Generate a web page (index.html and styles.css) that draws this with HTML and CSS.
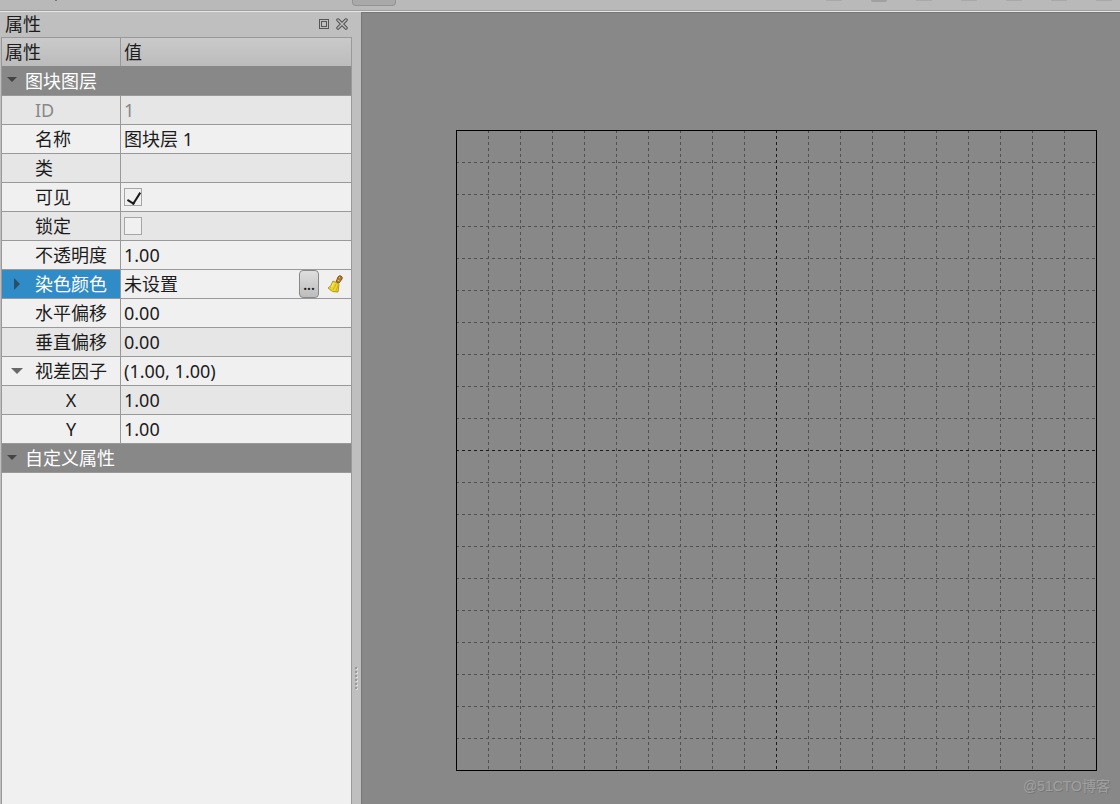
FILE: index.html
```html
<!DOCTYPE html>
<html lang="zh-CN">
<head>
<meta charset="utf-8">
<title>属性</title>
<link rel="stylesheet" href="styles.css">
</head>
<body>
<div class="app">
  <header class="toolbar">
    <span class="speck"></span>
    <button class="tool" type="button" aria-label="工具"></button>
    <div class="shadows"><i></i><i class="strong"></i><i></i><i></i><i></i><i></i><i></i></div>
  </header>
  <main class="work">
    <aside class="dock">
      <div class="title">
        <h1>属性</h1>
        <button type="button" aria-label="浮动"><svg width="12" height="12" viewBox="0 0 12 12" fill="none" stroke="#555" shape-rendering="crispEdges"><path d="M1.5 1.5h9v9h-9z"/><path d="M3.500 3.500h5v5h-5z"/></svg></button>
        <button type="button" aria-label="关闭"><svg width="12" height="12" viewBox="0 0 12 12" fill="none"><path d="M2 2l8 8M10 2l-8 8" stroke="#4c4c4c" stroke-width="3.400" stroke-linecap="round"/><path d="M2 2l8 8M10 2l-8 8" stroke="#c0c0c0" stroke-width="1.500" stroke-linecap="round"/></svg></button>
      </div>
      <div class="tree">
        <table>
          <colgroup><col class="key-col"><col></colgroup>
          <thead><tr><th scope="col">属性</th><th scope="col">值</th></tr></thead>
          <tbody>
            <tr class="group first"><th colspan="2"><svg class="arrow" width="10" height="6"><path d="M0 0h10L5 5z"/></svg>图块图层</th></tr>
            <tr class="alt off"><th scope="row">ID</th><td>1</td></tr>
            <tr><th scope="row">名称</th><td>图块层 1</td></tr>
            <tr class="alt"><th scope="row">类</th><td></td></tr>
            <tr><th scope="row"><label for="visible">可见</label></th><td><input id="visible" type="checkbox" checked></td></tr>
            <tr class="alt"><th scope="row"><label for="locked">锁定</label></th><td><input id="locked" type="checkbox"></td></tr>
            <tr><th scope="row">不透明度</th><td>1.00</td></tr>
            <tr class="selected"><th scope="row"><svg class="arrow side" width="6" height="12"><path d="M0 0v12L6 6z"/></svg>染色颜色</th><td>
              <div class="editor"><span>未设置</span>
                <button class="more" type="button">...</button>
                <button class="clear" type="button" aria-label="清除"><svg width="16" height="18" viewBox="0 0 16 18"><path d="M9 7l2-5q1-2 3-1 2 1 1 3l-3 4z" fill="#b5782c" stroke="#7d5520"/><path d="M12 2l1 1M10.500 5l2 1" stroke="#efc36b"/><path d="M6 6l6 3-1 8q-6 1-10-4 3-1 5-7z" fill="#f0d52d" stroke="#b09a18"/><path d="M7 8l-4 5M9 9l-3 6M11 10l-2 6" stroke="#cdb21c" fill="none"/><path d="M6.500 8l-2 4" stroke="#fff58a"/></svg></button>
              </div></td></tr>
            <tr><th scope="row">水平偏移</th><td>0.00</td></tr>
            <tr class="alt"><th scope="row">垂直偏移</th><td>0.00</td></tr>
            <tr><th scope="row"><svg class="arrow open" width="12" height="6"><path d="M0 0h12L6 6z"/></svg>视差因子</th><td>(1.00, 1.00)</td></tr>
            <tr class="alt child"><th scope="row">X</th><td>1.00</td></tr>
            <tr class="child"><th scope="row">Y</th><td>1.00</td></tr>
            <tr class="group"><th colspan="2"><svg class="arrow" width="10" height="6"><path d="M0 0h10L5 5z"/></svg>自定义属性</th></tr>
          </tbody>
        </table>
      </div>
    </aside>
    <div class="splitter"><i></i><i></i><i></i><i></i><i></i><i></i></div>
    <section class="canvas">
      <svg class="map" width="641" height="641" viewBox="0 0 641 641" fill="none" stroke="#000" shape-rendering="crispEdges">
        <path class="grid" d="M32.500 0v640M64.500 0v640M96.500 0v640M128.500 0v640M160.500 0v640M192.500 0v640M224.500 0v640M256.500 0v640M288.500 0v640M352.500 0v640M384.500 0v640M416.500 0v640M448.500 0v640M480.500 0v640M512.500 0v640M544.500 0v640M576.500 0v640M608.500 0v640"/>
        <path class="grid" d="M0 32.500h640M0 64.500h640M0 96.500h640M0 128.500h640M0 160.500h640M0 192.500h640M0 224.500h640M0 256.500h640M0 288.500h640M0 352.500h640M0 384.500h640M0 416.500h640M0 448.500h640M0 480.500h640M0 512.500h640M0 544.500h640M0 576.500h640M0 608.500h640"/>
        <path class="grid major" d="M320.500 0v640M0 320.500h640"/>
        <path d="M.5 .5h640v640H.5z"/>
      </svg>
      <span class="watermark">@51CTO博客</span>
    </section>
  </main>
</div>
</body>
</html>
```
FILE: styles.css
```css
* { box-sizing: border-box; }
body {
  margin: 0;
  font: 400 18px/28px "Noto Sans", "Noto Sans CJK SC", sans-serif;
  color: #1c1c1c;
  background: #bfbfbf;
}
button { padding: 0; border: 0; background: none; font: inherit; color: inherit; }
.app { display: flex; flex-direction: column; height: 100vh; overflow: hidden; }

.toolbar {
  display: flex;
  justify-content: space-between;
  align-items: flex-start;
  height: 12px;
  flex: none;
  background: #b9b9b9;
  border-bottom: 1px solid #e6e6e6;
  box-shadow: inset 0 -1px #a0a0a0;
}
.speck { width: 2px; height: 1px; margin-left: 55px; background: #777; }
.tool {
  width: 44px;
  height: 6px;
  margin-left: 295px;
  margin-right: auto;
  background: #a9a9a9;
  border: 1px solid #949494;
  border-top: 0;
  border-radius: 0 0 4px 4px;
}
.shadows { display: flex; gap: 29px; padding-right: 8px; }
.shadows i { width: 16px; height: 1px; background: #a8a8a8; border-radius: 0 0 8px 8px; }
.shadows .strong { height: 2px; background: #a0a0a0; }

.work { display: flex; flex: 1; min-height: 0; }
.dock { display: flex; flex-direction: column; flex: none; width: 352px; }
.title { display: flex; align-items: center; gap: 6px; height: 25px; padding: 0 4px 2px 5px; }
.title h1 { flex: 1; margin: 0; font: inherit; }
.title button { width: 12px; height: 12px; }
.title svg { display: block; }
.tree { flex: 1; margin-left: 1px; border: 1px solid #999; border-bottom: 0; background: #f0f0f0; }

table { width: 100%; table-layout: fixed; border-spacing: 0; }
.key-col { width: 119px; }
th, td { padding: 0 0 0 3px; text-align: left; font-weight: inherit; white-space: nowrap; }
thead th { height: 28px; background: linear-gradient(#cacaca, #bcbcbc); }
thead th:first-child { border-right: 1px solid #999; }
tbody th, tbody td { position: relative; height: 29px; border-bottom: 1px solid #999; }
tbody th { padding-left: 33px; border-right: 1px solid #999; }
.alt { background: #e6e6e6; }
.off { color: #888; }
.child th { padding: 0 0 0 20px; text-align: center; }
.group { background: #888; color: #fff; }
.group th { padding-left: 23px; border-right: 0; }
.first th { height: 30px; }
.selected th { background: #308cc6; color: #fff; }
.arrow { position: absolute; left: 5px; top: 11px; fill: #444; }
.arrow.open { left: 9px; fill: #686868; }
.arrow.side { left: 12px; top: 8px; fill: #274f68; }

input[type="checkbox"] {
  display: block;
  appearance: none;
  width: 18px;
  height: 18px;
  margin: 0;
  border: 1px solid #a6a6a6;
  background: #f0f0f0;
}
input:checked::after {
  content: "";
  display: block;
  width: 6px;
  height: 12px;
  margin: 1px 0 0 5px;
  border: solid #1a1a1a;
  border-width: 0 2px 2px 0;
  transform: rotate(32deg);
}
.editor { display: flex; align-items: center; height: 28px; padding-right: 8px; }
.editor span { flex: 1; }
.more {
  width: 20px;
  height: 28px;
  border: 1px solid #888;
  border-radius: 4px;
  background: linear-gradient(#dedede, #bdbdbd);
  font-weight: 600;
  font-size: 14px;
}
.clear { width: 16px; height: 18px; margin-left: 8px; }
.clear svg { display: block; }

.splitter {
  display: flex;
  flex-direction: column;
  align-items: center;
  justify-content: center;
  gap: 2px;
  flex: none;
  width: 9px;
  padding: 540px 2px 0 0;
  background: #bfbfbf;
}
.splitter i { width: 2px; height: 2px; background: #999; box-shadow: 1px 1px #ddd; }
.canvas {
  position: relative;
  flex: 1;
  min-width: 0;
  padding: 118px 0 0 95px;
  overflow: hidden;
  background: #888;
  box-shadow: inset 1px 1px #777;
}
.map { display: block; }
.grid { stroke: #505050; stroke-dasharray: 3 3; }
.grid.major { stroke: #1c1c1c; }
.watermark {
  position: absolute;
  right: 10px;
  bottom: 4px;
  font: 14px/28px "Liberation Sans", "Noto Sans CJK SC", sans-serif;
  color: #a0a0a0;
  text-shadow: 1px 1px #777;
}
```
